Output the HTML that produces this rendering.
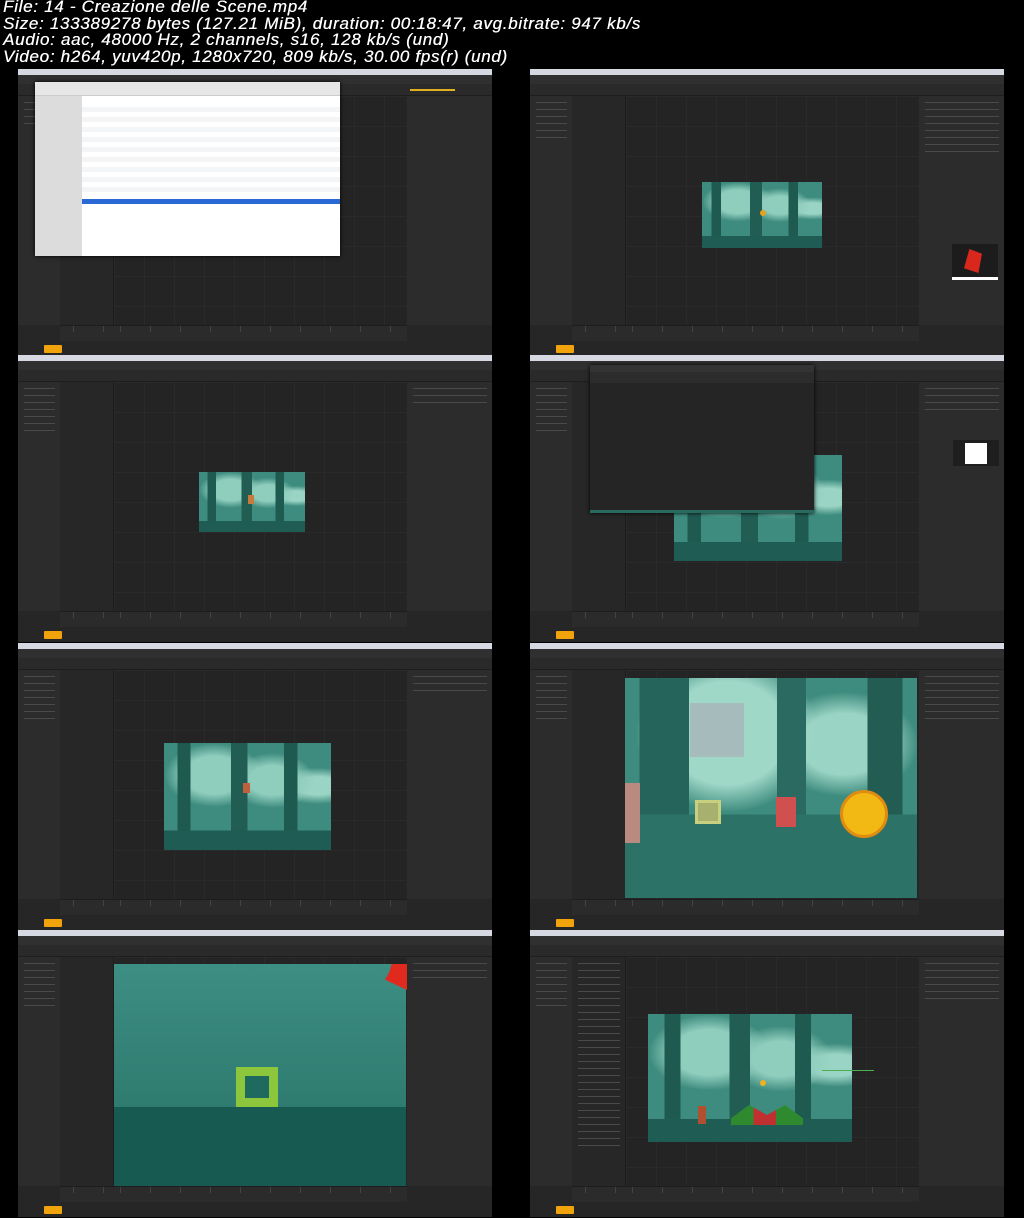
<!DOCTYPE html>
<html><head><meta charset="utf-8">
<style>
*{margin:0;padding:0;box-sizing:border-box}
body{width:1024px;height:1218px;background:#000;position:relative;overflow:hidden;font-family:"Liberation Sans",sans-serif}
.hdr{position:absolute;left:3px;top:-1px;color:#fff;font-style:italic;font-size:17px;line-height:16.6px;white-space:pre;letter-spacing:0.7px;text-shadow:0.3px 0 0 #fff}
.cell{position:absolute;width:512px;height:288px;overflow:hidden}
.scr{position:absolute;left:18px;top:0;width:474px;height:287px;background:#262626;overflow:hidden}
.mb{position:absolute;left:0;top:0;width:474px;height:6px;background:#d6d9e2}
.tb{position:absolute;left:0;top:6px;width:474px;height:9px;background:#303030}
.tl{position:absolute;left:0;top:15px;width:474px;height:12px;background:#2a2a2a;border-bottom:1px solid #1e1e1e}
.lp{position:absolute;left:0;top:27px;width:42px;height:229px;background:#2c2c2c}
.hi{position:absolute;left:42px;top:27px;width:54px;height:229px;background:#272727;border-right:1px solid #1c1c1c}
.vp{position:absolute;left:96px;top:27px;width:292px;height:229px;background-color:#242424;
background-image:linear-gradient(#2a2a2a 1px,transparent 1px),linear-gradient(90deg,#2a2a2a 1px,transparent 1px);background-size:30px 30px}
.rp{position:absolute;left:389px;top:27px;width:85px;height:229px;background:#2c2c2c}
.tm{position:absolute;left:42px;top:256px;width:347px;height:16px;background:#2b2b2b;border-top:1px solid #1d1d1d;
background-image:repeating-linear-gradient(90deg,#444 0 1px,transparent 1px 30px);background-position:60px 0;background-size:100% 6px;background-repeat:repeat-x}
.bt{position:absolute;left:0;top:272px;width:474px;height:15px;background:#262626}
.ob{position:absolute;left:44px;top:276px;width:18px;height:8px;background:#f0a30a;border-radius:1px}
.rows i{display:block;height:1px;margin:6px 5px 0 6px;background:#4a4a4a}
.forest{position:absolute;background-color:#3e8c7f;
background-image:
linear-gradient(180deg,transparent 82%,#1e5c54 82%),
linear-gradient(90deg,transparent 8%,#1f5a51 8% 16%,transparent 16% 40%,#225d54 40% 50%,transparent 50% 72%,#1f5a51 72% 80%,transparent 80%),
radial-gradient(ellipse at 30% 30%,#8fcdbd 0 18%,transparent 30%),
radial-gradient(ellipse at 65% 35%,#8fcdbd 0 15%,transparent 28%),
radial-gradient(ellipse at 92% 40%,#9ad4c4 0 10%,transparent 20%);}
</style></head><body>
<div class="hdr">File: 14 - Creazione delle Scene.mp4
Size: 133389278 bytes (127.21 MiB), duration: 00:18:47, avg.bitrate: 947 kb/s
Audio: aac, 48000 Hz, 2 channels, s16, 128 kb/s (und)
Video: h264, yuv420p, 1280x720, 809 kb/s, 30.00 fps(r) (und)</div>

<!-- cell 1 -->
<div class="cell" style="left:0;top:69px">
<div class="scr"><div class="mb"></div><div class="tb"></div><div class="tl"></div><div class="lp rows"><i></i><i></i><i></i><i></i></div><div class="hi"></div><div class="vp"></div><div class="rp"></div><div class="tm"></div><div class="bt"></div></div>
<div class="ob"></div>
<div style="position:absolute;left:410px;top:20px;width:45px;height:2px;background:#e0b020"></div>
<div style="position:absolute;left:35px;top:13px;width:305px;height:174px;background:#fff;box-shadow:0 0 4px #000">
 <div style="position:absolute;left:0;top:0;width:305px;height:14px;background:#e6e6e6;border-bottom:1px solid #ccc"></div>
 <div style="position:absolute;left:0;top:14px;width:47px;height:160px;background:#dcdcdc"></div>
 <div style="position:absolute;left:47px;top:20px;width:258px;height:95px;background:repeating-linear-gradient(#fff 0 5px,#f4f5f7 5px 10px)"></div>
 <div style="position:absolute;left:47px;top:117px;width:258px;height:5px;background:#2a68d6"></div>
</div>
</div>

<!-- cell 2 -->
<div class="cell" style="left:512px;top:69px">
<div class="scr"><div class="mb"></div><div class="tb"></div><div class="tl"></div><div class="lp rows"><i></i><i></i><i></i><i></i><i></i><i></i></div><div class="hi"></div><div class="vp"></div><div class="rp rows"><i></i><i></i><i></i><i></i><i></i><i></i><i></i><i></i></div><div class="tm"></div><div class="bt"></div></div>
<div class="ob"></div>
<div class="forest" style="left:190px;top:113px;width:120px;height:66px"></div>
<div style="position:absolute;left:248px;top:141px;width:6px;height:6px;background:#e8a020;border-radius:50%"></div>
<div style="position:absolute;left:440px;top:175px;width:46px;height:36px;background:#1c1c1c"></div>
<div style="position:absolute;left:452px;top:180px;width:18px;height:24px;background:#d8281e;clip-path:polygon(30% 0,100% 20%,80% 100%,0 80%)"></div>
<div style="position:absolute;left:440px;top:208px;width:46px;height:3px;background:#fff"></div>
</div>

<!-- cell 3 -->
<div class="cell" style="left:0;top:355px">
<div class="scr"><div class="mb"></div><div class="tb"></div><div class="tl"></div><div class="lp rows"><i></i><i></i><i></i><i></i><i></i><i></i><i></i></div><div class="hi"></div><div class="vp"></div><div class="rp rows"><i></i><i></i><i></i></div><div class="tm"></div><div class="bt"></div></div>
<div class="ob"></div>
<div class="forest" style="left:199px;top:117px;width:106px;height:60px"></div>
<div style="position:absolute;left:248px;top:140px;width:6px;height:9px;background:#c87a3a"></div>
</div>

<!-- cell 4 -->
<div class="cell" style="left:512px;top:355px">
<div class="scr"><div class="mb"></div><div class="tb"></div><div class="tl"></div><div class="lp rows"><i></i><i></i><i></i><i></i><i></i><i></i><i></i></div><div class="hi"></div><div class="vp"></div><div class="rp rows"><i></i><i></i><i></i><i></i></div><div class="tm"></div><div class="bt"></div></div>
<div class="ob"></div>
<div class="forest" style="left:162px;top:100px;width:168px;height:106px"></div>
<div style="position:absolute;left:78px;top:10px;width:224px;height:148px;background:#252525;border-bottom:3px solid #2a6b5f;box-shadow:0 0 4px #000">
 <div style="position:absolute;left:0;top:0;width:224px;height:7px;background:#333"></div>
 <div style="position:absolute;left:0;top:7px;width:224px;height:11px;background:#2c2c2c"></div>
</div>
<div style="position:absolute;left:441px;top:85px;width:46px;height:26px;background:#1e1e1e"></div>
<div style="position:absolute;left:453px;top:88px;width:22px;height:21px;background:#fff"></div>
</div>

<!-- cell 5 -->
<div class="cell" style="left:0;top:643px">
<div class="scr"><div class="mb"></div><div class="tb"></div><div class="tl"></div><div class="lp rows"><i></i><i></i><i></i><i></i><i></i><i></i><i></i></div><div class="hi"></div><div class="vp"></div><div class="rp rows"><i></i><i></i><i></i></div><div class="tm"></div><div class="bt"></div></div>
<div class="ob"></div>
<div class="forest" style="left:164px;top:100px;width:167px;height:107px"></div>
<div style="position:absolute;left:243px;top:140px;width:7px;height:10px;background:#c0603a"></div>
</div>

<!-- cell 6 -->
<div class="cell" style="left:512px;top:643px">
<div class="scr"><div class="mb"></div><div class="tb"></div><div class="tl"></div><div class="lp rows"><i></i><i></i><i></i><i></i><i></i><i></i><i></i></div><div class="hi"></div><div class="vp"></div><div class="rp rows"><i></i><i></i><i></i><i></i><i></i><i></i><i></i></div><div class="tm"></div><div class="bt"></div></div>
<div class="ob"></div>
<div class="forest" style="left:113px;top:35px;width:292px;height:220px;background-image:
linear-gradient(180deg,transparent 62%,#2c7266 62%),
linear-gradient(90deg,transparent 5%,#25645a 5% 22%,transparent 22% 52%,#2a6a60 52% 62%,transparent 62% 83%,#235c53 83% 95%,transparent 95%),
radial-gradient(ellipse at 35% 25%,#a0d8c8 0 22%,transparent 34%),
radial-gradient(ellipse at 75% 30%,#9ad4c4 0 14%,transparent 24%)"></div>
<div style="position:absolute;left:178px;top:60px;width:54px;height:54px;background:rgba(170,170,180,.6)"></div>
<div style="position:absolute;left:183px;top:157px;width:26px;height:24px;background:#a8b070;border:3px solid #c8d080"></div>
<div style="position:absolute;left:264px;top:154px;width:20px;height:30px;background:#d05050"></div>
<div style="position:absolute;left:113px;top:140px;width:15px;height:60px;background:#b88a80"></div>
<div style="position:absolute;left:328px;top:147px;width:48px;height:48px;background:#f2b814;border-radius:50%;border:3px solid #e08c10"></div>
</div>

<!-- cell 7 -->
<div class="cell" style="left:0;top:930px">
<div class="scr"><div class="mb"></div><div class="tb"></div><div class="tl"></div><div class="lp rows"><i></i><i></i><i></i><i></i><i></i><i></i><i></i></div><div class="hi"></div><div class="vp"></div><div class="rp rows"><i></i><i></i><i></i></div><div class="tm"></div><div class="bt"></div></div>
<div class="ob"></div>
<div style="position:absolute;left:114px;top:34px;width:292px;height:143px;background:linear-gradient(180deg,#3d8e83,#2f7b70)"></div>
<div style="position:absolute;left:114px;top:177px;width:292px;height:79px;background:#175a52"></div>
<div style="position:absolute;left:236px;top:137px;width:42px;height:40px;border:9px solid #8cc63c;background:#1f6a5e"></div>
<div style="position:absolute;left:385px;top:34px;width:22px;height:26px;background:#e02a1e;clip-path:polygon(30% 0,100% 0,100% 100%,0 60%,20% 30%)"></div>
</div>

<!-- cell 8 -->
<div class="cell" style="left:512px;top:930px">
<div class="scr"><div class="mb"></div><div class="tb"></div><div class="tl"></div><div class="lp rows"><i></i><i></i><i></i><i></i><i></i><i></i><i></i></div><div class="hi rows"><i></i><i></i><i></i><i></i><i></i><i></i><i></i><i></i><i></i><i></i><i></i><i></i><i></i><i></i><i></i><i></i><i></i><i></i><i></i><i></i><i></i><i></i><i></i><i></i><i></i><i></i><i></i></div><div class="vp"></div><div class="rp rows"><i></i><i></i><i></i><i></i><i></i><i></i></div><div class="tm"></div><div class="bt"></div></div>
<div class="ob"></div>
<div class="forest" style="left:136px;top:84px;width:204px;height:128px"></div>
<div style="position:absolute;left:210px;top:170px;width:90px;height:25px;background:linear-gradient(90deg,transparent 0 10%,#2f8a2f 10% 35%,#c03030 35% 60%,#2f8a2f 60% 90%,transparent 90%);clip-path:polygon(0 100%,30% 20%,50% 60%,70% 20%,100% 100%)"></div>
<div style="position:absolute;left:186px;top:176px;width:8px;height:18px;background:#b05030"></div>
<div style="position:absolute;left:248px;top:150px;width:6px;height:6px;background:#f0b020;border-radius:50%"></div>
<div style="position:absolute;left:310px;top:140px;width:52px;height:1px;background:#4caf50"></div>
</div>
</body></html>
